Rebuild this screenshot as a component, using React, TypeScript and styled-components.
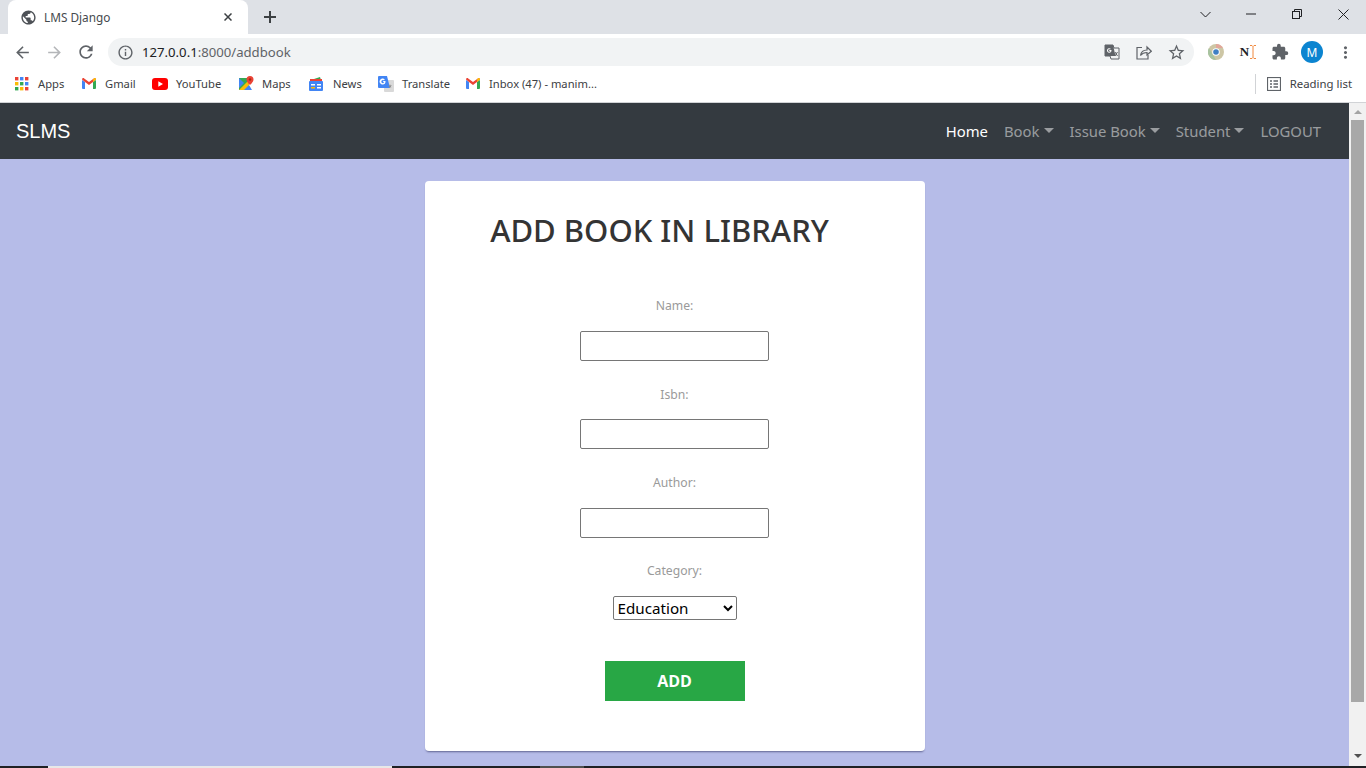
import styled, { createGlobalStyle } from 'styled-components';
import { MdArrowBack, MdArrowForward, MdExtension, MdInfoOutline, MdMoreVert, MdPublic, MdRefresh, MdStarBorder } from 'react-icons/md';

const GlobalStyle = createGlobalStyle`
  * {
    box-sizing: border-box;
  }
  html, body {
    margin: 0;
    height: 768px;
    overflow: hidden;
    background: #b6bce8;
    font-family: "Open Sans", "Noto Sans", sans-serif;
  }
`;

const Screen = styled.div`
  display: flex;
  flex-direction: column;
  width: 1366px;
  height: 768px;
`;

const TabStrip = styled.div`
  display: flex;
  align-items: flex-end;
  height: 34px;
  padding-left: 8px;
  background: #dee1e6;
  flex: none;
`;

const Tab = styled.div`
  display: flex;
  align-items: center;
  width: 240px;
  height: 34px;
  padding: 0 16px 0 12px;
  background: #fff;
  border-radius: 8px 8px 0 0;
  color: #45494d;
  font-size: 12px;
  svg {
    flex: none;
  }
`;

const TabTitle = styled.span`
  flex: 1;
  margin: 0 0 1px 7px;
  font-family: "Noto Sans", sans-serif;
  font-size: 11.8px;
`;

const NewTab = styled.div`
  display: flex;
  margin: 0 0 11px 16px;
  color: #3c4043;
`;

const WindowControls = styled.div`
  display: flex;
  align-items: center;
  height: 28px;
  margin-left: auto;
  align-self: flex-start;
  color: #202124;
`;

const WindowButton = styled.div<{ $w: number }>`
  display: flex;
  justify-content: center;
  align-items: center;
  width: ${props => props.$w}px;
  height: 28px;
`;

const Toolbar = styled.div`
  display: flex;
  align-items: center;
  height: 34px;
  padding: 2px 0 0 6px;
  background: #fff;
  flex: none;
`;

const NavIcon = styled.div<{ $faded?: boolean }>`
  display: flex;
  justify-content: center;
  width: 32px;
  color: ${props => (props.$faded ? '#b4b6b9' : '#5f6368')};
`;

const Omnibox = styled.div`
  display: flex;
  align-items: center;
  width: 1086px;
  height: 28px;
  margin-left: 6px;
  padding: 0 2px 0 9px;
  border-radius: 14px;
  background: #f1f3f4;
  color: #5f6368;
`;

const Url = styled.span`
  flex: 1;
  margin-left: 8px;
  font-family: "Noto Sans", sans-serif;
  font-size: 13.15px;
  color: #5f6368;
  b {
    font-weight: 400;
    color: #202124;
  }
`;

const OmniAction = styled.div`
  display: flex;
  justify-content: center;
  width: 32px;
  color: #5f6368;
`;

const Extensions = styled.div`
  display: flex;
  align-items: center;
  margin-left: 6px;
  color: #5f6368;
`;

const ExtSlot = styled.div<{ $w: number }>`
  display: flex;
  justify-content: center;
  align-items: center;
  width: ${props => props.$w}px;
`;

const NotionMark = styled.span`
  display: flex;
  align-items: center;
  gap: 1px;
  font-family: "Liberation Serif", serif;
  font-weight: 700;
  font-size: 13px;
  color: #202124;
`;

const Avatar = styled.div`
  display: flex;
  justify-content: center;
  align-items: center;
  width: 22px;
  height: 22px;
  border-radius: 50%;
  background: #0b84d0;
  color: #fff;
  font-size: 12px;
  font-family: "Noto Sans", sans-serif;
`;

const BookmarkBar = styled.div`
  display: flex;
  align-items: center;
  height: 35px;
  padding: 0 14px 3px 15px;
  background: #fff;
  border-bottom: 1px solid #d1d3d6;
  flex: none;
`;

const Bookmark = styled.div<{ $w: number }>`
  display: flex;
  align-items: center;
  width: ${props => props.$w}px;
  color: #3c4043;
  font-family: "Noto Sans", sans-serif;
  font-size: 11.2px;
  white-space: nowrap;
  svg {
    flex: none;
    margin-right: 9px;
  }
`;

const ReadingList = styled.div`
  display: flex;
  align-items: center;
  height: 20px;
  margin-left: auto;
  padding-left: 11px;
  border-left: 1px solid #d1d3d6;
  color: #3c4043;
  font-family: "Noto Sans", sans-serif;
  font-size: 11.4px;
  svg {
    margin-right: 9px;
  }
`;

const Viewport = styled.div`
  display: flex;
  flex: 1;
  min-height: 0;
`;

const Page = styled.div`
  flex: 1;
  min-width: 0;
  overflow: hidden;
  background: #b6bce8;
`;

const Navbar = styled.nav`
  display: flex;
  align-items: center;
  height: 56px;
  padding: 0 28px 0 16px;
  background: #343a40;
`;

const Brand = styled.a`
  font-family: "Liberation Sans", sans-serif;
  font-size: 20px;
  color: #fff;
`;

const NavLinks = styled.ul`
  display: flex;
  align-items: center;
  gap: 16px;
  margin: 0 0 0 auto;
  padding: 0;
  list-style: none;
`;

const NavLink = styled.li<{ $active?: boolean; $caret?: boolean }>`
  display: flex;
  align-items: center;
  font-family: "Noto Sans", sans-serif;
  font-size: 14.85px;
  color: ${props => (props.$active ? '#fff' : 'rgba(255, 255, 255, 0.5)')};
  &::after {
    content: ${props => (props.$caret ? "''" : 'none')};
    margin-left: 4px;
    margin-bottom: 2px;
    border-top: 5px solid rgba(255, 255, 255, 0.5);
    border-left: 5px solid transparent;
    border-right: 5px solid transparent;
  }
`;

const Card = styled.main`
  width: 500px;
  height: 570px;
  margin: 22px auto 0;
  padding: 25px 0 0;
  background: #fff;
  border-radius: 4px;
  box-shadow: 0 2px 2px -1px rgba(60, 64, 110, 0.7);
`;

const Title = styled.h1`
  margin: 0 30px 0 0;
  font-family: "Noto Sans", sans-serif;
  font-size: 31px;
  font-weight: 500;
  line-height: 48px;
  text-align: center;
  color: #343434;
`;

const Form = styled.form`
  display: flex;
  flex-direction: column;
  align-items: center;
  margin-top: 43px;
`;

const Field = styled.div`
  display: flex;
  flex-direction: column;
  align-items: center;
  height: 88.4px;
`;

const Label = styled.label`
  height: 18px;
  margin: 0.3px 0 15.7px;
  font-family: "Noto Sans", sans-serif;
  font-size: 12.2px;
  line-height: 18px;
  color: #9a9a9a;
`;

const TextInput = styled.input`
  width: 189px;
  height: 30px;
  padding: 1px 2px;
  background: #fff;
  border: 1px solid #767676;
  border-radius: 2px;
`;

const Select = styled.select`
  width: 124px;
  height: 24px;
  background: #fff;
  border: 1px solid #767676;
  border-radius: 2px;
  font-family: "Noto Sans", sans-serif;
  font-size: 15.2px;
  color: #000;
`;

const AddButton = styled.button`
  width: 140px;
  height: 40px;
  margin-top: 10px;
  border: 0;
  background: #28a745;
  color: #fff;
  font-family: "Open Sans", sans-serif;
  font-size: 16px;
  font-weight: 700;
`;

const Scrollbar = styled.div`
  display: flex;
  flex-direction: column;
  align-items: center;
  width: 17px;
  background: #f1f1f1;
  flex: none;
`;

const ScrollArrow = styled.div<{ $down?: boolean }>`
  width: 0;
  height: 0;
  margin: ${props => (props.$down ? 'auto 0 8px' : '7px 0 0')};
  border-left: 4px solid transparent;
  border-right: 4px solid transparent;
  border-top: ${props => (props.$down ? '4px solid #505050' : '0')};
  border-bottom: ${props => (props.$down ? '0' : '4px solid #a3a3a3')};
`;

const ScrollThumb = styled.div`
  width: 13px;
  height: 582px;
  margin-top: 6px;
  background: #a8a8a8;
`;

const Taskbar = styled.div`
  display: flex;
  height: 2px;
  background: #202124;
  flex: none;
`;

const TaskbarSegment = styled.div<{ $w: number; $bg: string }>`
  width: ${props => props.$w}px;
  background: ${props => props.$bg};
`;

const GridIcon = () => {
  const colors = ['#ea4335', '#4285f4', '#ea4335', '#fbbc05', '#34a853', '#4285f4', '#34a853', '#fbbc05', '#ea4335'];
  return (
    <svg width='14' height='14' viewBox='0 0 14 14'>
      {colors.map((c, i) => (
        <rect key={i} x={(i % 3) * 5} y={Math.floor(i / 3) * 5} width='3.4' height='3.4' fill={c} />
      ))}
    </svg>
  );
};

const GmailIcon = () => (
  <svg width='14' height='11' viewBox='0 0 14 11'>
    <path d='M0 2v8a1 1 0 0 0 1 1h2V4z' fill='#4285f4' />
    <path d='M14 2v8a1 1 0 0 1-1 1h-2V4z' fill='#34a853' />
    <path d='M0 1.5C0 .3 1.300-.3 2.200.4L7 4l4.800-3.600c.9-.7 2.200-.1 2.200 1.100L11 4 7 7 3 4z' fill='#ea4335' />
    <path d='M11 1.500l.8-1.100c.9-.7 2.200-.1 2.200 1.100L11 4z' fill='#fbbc05' />
  </svg>
);

const YouTubeIcon = () => (
  <svg width='16' height='12' viewBox='0 0 16 12' style={{ marginRight: 8 }}>
    <rect width='16' height='12' rx='3' fill='#f00' />
    <path d='M6.300 3.300v5.400L11 6z' fill='#fff' />
  </svg>
);

const MapsIcon = () => (
  <svg width='15' height='15' viewBox='0 0 15 15' style={{ marginRight: 8 }}>
    <path d='M0 2h10v12H0z' fill='#34a853' />
    <path d='M0 14L10 4v10z' fill='#fbbc05' />
    <path d='M0 2l5 5-5 5z' fill='#4285f4' />
    <path d='M5 14l5-5 3 5z' fill='#4285f4' />
    <path d='M11 0a3.500 3.500 0 0 1 3.500 3.500C14.500 6 11 9 11 9S7.500 6 7.500 3.500A3.500 3.500 0 0 1 11 0z' fill='#ea4335' />
    <circle cx='11' cy='3.500' r='1.200' fill='#a52714' />
  </svg>
);

const NewsIcon = () => (
  <svg width='14' height='14' viewBox='0 0 14 14' style={{ marginRight: 10 }}>
    <path d='M2 3l9-3 1 3z' fill='#34a853' />
    <rect x='1' y='2' width='12' height='3' fill='#ea4335' />
    <rect y='4' width='14' height='10' rx='1' fill='#4285f4' />
    <rect x='2' y='7' width='4' height='1.500' fill='#fff' />
    <rect x='8' y='7' width='4' height='1.500' fill='#fff' />
    <rect x='8' y='10' width='4' height='1.500' fill='#fff' />
    <rect x='2' y='10' width='4' height='1.500' fill='#fbbc05' />
  </svg>
);

const TranslateIcon = () => (
  <svg width='16' height='16' viewBox='0 0 16 16' style={{ marginRight: 8 }}>
    <rect x='6' y='4' width='10' height='12' rx='1' fill='#d9d9d9' />
    <path d='M0 1a1 1 0 0 1 1-1h8l3 12H1a1 1 0 0 1-1-1z' fill='#4285f4' />
    <path d='M7.500 5H5.200v1.200h1c-.2.700-.7 1-1.300 1a1.600 1.600 0 0 1 0-3.200c.4 0 .7.100 1 .4l.9-.9A3 3 0 1 0 4.900 8.500c1.700 0 2.700-1.200 2.600-3.500z' fill='#fff' />
    <path d='M12 8l.5 1.500H14l-1.200 1 .5 1.500-1.300-1-1.300 1 .5-1.500-1.200-1h1.500z' fill='#8a8a8a' />
  </svg>
);

const ReadingIcon = () => (
  <svg width='14' height='14' viewBox='0 0 14 14' fill='none' stroke='#5f6368'>
    <rect x='.5' y='.5' width='13' height='13' strokeWidth='1.200' />
    <path d='M3 4h2M3 7h2M3 10h2M6.500 4H11M6.500 7H11M6.500 10H11' strokeWidth='1.300' />
  </svg>
);

const TranslatePageIcon = () => (
  <svg width='16' height='16' viewBox='0 0 16 16'>
    <path d='M1 1h8l1 3h5v11H7l-1-3H1z' fill='none' stroke='#5f6368' />
    <path d='M1 1h8l2.500 11H1z' fill='#5f6368' />
    <path d='M7.500 6H5.300v1h1.100c-.2.500-.5.800-1.100.8a1.300 1.300 0 0 1 0-2.600c.3 0 .6.100.8.300l.7-.7A2.300 2.300 0 1 0 5.300 8.800c1.400 0 2.300-1 2.200-2.800z' fill='#fff' />
    <path d='M11 8l2.500 4M13.500 8L11 12' stroke='#5f6368' />
  </svg>
);

const ShareIcon = () => (
  <svg width='16' height='15' viewBox='0 0 16 15' fill='none' stroke='#5f6368' strokeWidth='1.200'>
    <path d='M6 2.500H1v11.500h11V10' />
    <path d='M4.500 10.500c.5-3.500 3-5.500 6.500-5.500V2l4.300 4.200L11 10V7.500c-2.600 0-5 1-6.500 3z' />
  </svg>
);

const ChromeIcon = () => (
  <svg width='16' height='16' viewBox='0 0 16 16'>
    <circle cx='8' cy='8' r='8' fill='#cdc6a5' />
    <path d='M8 0a8 8 0 0 1 7 4H8z' fill='#e2a79a' />
    <path d='M1 4l3.500 6L8 16a8 8 0 0 1-7-12z' fill='#a8c3a0' />
    <circle cx='8' cy='8' r='3.800' fill='#fff' />
    <circle cx='8' cy='8' r='2.800' fill='#3f7fc4' />
  </svg>
);

const IBeam = () => (
  <svg width='6' height='14' viewBox='0 0 6 14' fill='none' stroke='#f0883e'>
    <path d='M0 .5h2l1 1 1-1h2M3 1.500v11M0 13.500h2l1-1 1 1h2' />
  </svg>
);

const Minimize = () => (
  <svg width='10' height='10' viewBox='0 0 10 10'>
    <path d='M0 5h10' stroke='currentColor' />
  </svg>
);

const Restore = () => (
  <svg width='10' height='10' viewBox='0 0 10 10' fill='none' stroke='currentColor'>
    <rect x='.5' y='2.500' width='7' height='7' />
    <path d='M2.500 2.500V.5h7v7H7.500' />
  </svg>
);

const CloseX = () => (
  <svg width='11' height='11' viewBox='0 0 11 11'>
    <path d='M.5.5l10 10M10.500.5l-10 10' stroke='currentColor' />
  </svg>
);

const Chevron = () => (
  <svg width='11' height='7' viewBox='0 0 11 7' fill='none'>
    <path d='M.5 1l5 5 5-5' stroke='currentColor' />
  </svg>
);

const PlusIcon = () => (
  <svg width='12' height='12' viewBox='0 0 12 12'>
    <path d='M6 0v12M0 6h12' stroke='currentColor' strokeWidth='2' />
  </svg>
);

const TabClose = () => (
  <svg width='8' height='8' viewBox='0 0 8 8'>
    <path d='M.5.5l7 7M7.500.5l-7 7' stroke='#3c4043' strokeWidth='1.500' />
  </svg>
);

const App = () => {
  return (
    <Screen>
      <GlobalStyle />
      <TabStrip>
        <Tab>
          <MdPublic size={17} color='#4d5156' />
          <TabTitle>LMS Django</TabTitle>
          <TabClose />
        </Tab>
        <NewTab>
          <PlusIcon />
        </NewTab>
        <WindowControls>
          <WindowButton $w={45}>
            <Chevron />
          </WindowButton>
          <WindowButton $w={46}>
            <Minimize />
          </WindowButton>
          <WindowButton $w={46}>
            <Restore />
          </WindowButton>
          <WindowButton $w={46}>
            <CloseX />
          </WindowButton>
        </WindowControls>
      </TabStrip>

      <Toolbar>
        <NavIcon>
          <MdArrowBack size={19} />
        </NavIcon>
        <NavIcon $faded>
          <MdArrowForward size={19} />
        </NavIcon>
        <NavIcon>
          <MdRefresh size={20} />
        </NavIcon>
        <Omnibox>
          <MdInfoOutline size={17} />
          <Url>
            <b>127.0.0.1</b>:8000/addbook
          </Url>
          <OmniAction>
            <TranslatePageIcon />
          </OmniAction>
          <OmniAction>
            <ShareIcon />
          </OmniAction>
          <OmniAction>
            <MdStarBorder size={19} />
          </OmniAction>
        </Omnibox>
        <Extensions>
          <ExtSlot $w={32}>
            <ChromeIcon />
          </ExtSlot>
          <ExtSlot $w={32}>
            <NotionMark>
              N
              <IBeam />
            </NotionMark>
          </ExtSlot>
          <ExtSlot $w={32}>
            <MdExtension size={18} />
          </ExtSlot>
          <ExtSlot $w={32}>
            <Avatar>M</Avatar>
          </ExtSlot>
          <ExtSlot $w={34}>
            <MdMoreVert size={19} />
          </ExtSlot>
        </Extensions>
      </Toolbar>

      <BookmarkBar>
        <Bookmark $w={67}>
          <GridIcon />
          Apps
        </Bookmark>
        <Bookmark $w={70}>
          <GmailIcon />
          Gmail
        </Bookmark>
        <Bookmark $w={87}>
          <YouTubeIcon />
          YouTube
        </Bookmark>
        <Bookmark $w={70}>
          <MapsIcon />
          Maps
        </Bookmark>
        <Bookmark $w={69}>
          <NewsIcon />
          News
        </Bookmark>
        <Bookmark $w={88}>
          <TranslateIcon />
          Translate
        </Bookmark>
        <Bookmark $w={140}>
          <GmailIcon />
          Inbox (47) - manim...
        </Bookmark>
        <ReadingList>
          <ReadingIcon />
          Reading list
        </ReadingList>
      </BookmarkBar>

      <Viewport>
        <Page>
          <Navbar>
            <Brand>SLMS</Brand>
            <NavLinks>
              <NavLink $active>Home</NavLink>
              <NavLink $caret>Book</NavLink>
              <NavLink $caret>Issue Book</NavLink>
              <NavLink $caret>Student</NavLink>
              <NavLink>LOGOUT</NavLink>
            </NavLinks>
          </Navbar>
          <Card>
            <Title>ADD BOOK IN LIBRARY</Title>
            <Form>
              <Field>
                <Label>Name:</Label>
                <TextInput type='text' />
              </Field>
              <Field>
                <Label>Isbn:</Label>
                <TextInput type='text' />
              </Field>
              <Field>
                <Label>Author:</Label>
                <TextInput type='text' />
              </Field>
              <Field>
                <Label>Category:</Label>
                <Select defaultValue='Education'>
                  <option>Education</option>
                </Select>
              </Field>
              <AddButton type='button'>ADD</AddButton>
            </Form>
          </Card>
        </Page>
        <Scrollbar>
          <ScrollArrow />
          <ScrollThumb />
          <ScrollArrow $down />
        </Scrollbar>
      </Viewport>

      <Taskbar>
        <TaskbarSegment $w={48} $bg='#202124' />
        <TaskbarSegment $w={344} $bg='#e8e8e8' />
        <TaskbarSegment $w={148} $bg='#202124' />
        <TaskbarSegment $w={44} $bg='#505050' />
      </Taskbar>
    </Screen>
  );
};

export default App;
